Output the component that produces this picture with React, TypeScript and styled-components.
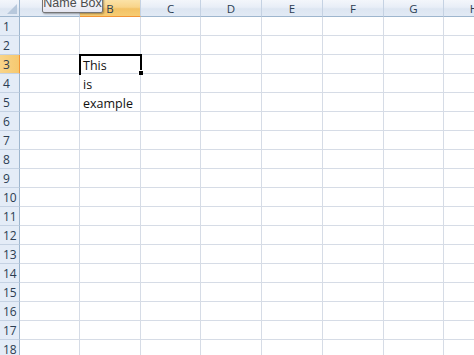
import React from "react";
import styled, { createGlobalStyle, css } from "styled-components";

const Global = createGlobalStyle`
  html, body { margin: 0; padding: 0; background: #ffffff; overflow: hidden; }
  #root { width: 474px; height: 355px; overflow: hidden; }
`;

const COLS = ["A", "B", "C", "D", "E", "F", "G", "H"];
const WIDTHS = [60, 61, 60, 61, 61, 61, 60, 61];
const ROWS = Array.from({ length: 18 }, (_, i) => i + 1);
const SEL_COL = "B";
const SEL_ROW = 3;
const CONTENT: Record<string, string> = { B3: "This", B4: "is", B5: "example" };

const Sheet = styled.div`
  width: 474px;
  height: 355px;
  overflow: hidden;
  display: grid;
  grid-template-columns: 20px ${WIDTHS.map((w) => `${w}px`).join(" ")};
  grid-auto-rows: 19px;
  grid-template-rows: 17px;
  font-family: "Open Sans", "Noto Sans", sans-serif;
`;

const headerBase = css<{ $sel?: boolean }>`
  box-sizing: border-box;
  display: flex;
  align-items: center;
  justify-content: center;
  color: #2b3d52;
  background: ${(p) =>
    p.$sel
      ? "linear-gradient(#fbe2a7 0%, #f8d48a 45%, #f3c266 55%, #f6cd73 100%)"
      : "linear-gradient(#f3f6fb 0%, #e8eef7 45%, #dde6f2 55%, #e2eaf5 100%)"};
`;

const Corner = styled.div`
  ${headerBase};
  border-right: 1px solid #9eb6ce;
  border-bottom: 1px solid #9eb6ce;
  justify-content: flex-end;
  align-items: flex-end;
  padding: 0 2px 2px 0;
`;

const ColHead = styled.div<{ $sel?: boolean }>`
  ${headerBase};
  position: relative;
  font-size: 11.5px;
  padding-top: 1px;
  border-right: 1px solid #c5d2e3;
  border-bottom: 1px solid ${(p) => (p.$sel ? "#f29436" : "#9eb6ce")};
`;

const RowHead = styled.div<{ $sel?: boolean }>`
  ${headerBase};
  background: ${(p) =>
    p.$sel ? "linear-gradient(90deg, #f8d48a, #f6c96f)" : "#e4ecf7"};
  justify-content: flex-start;
  padding-left: 3px;
  font-size: 12px;
  border-right: 1px solid ${(p) => (p.$sel ? "#f29436" : "#9eb6ce")};
  border-bottom: 1px solid #c5d2e3;
`;

const Cell = styled.div`
  position: relative;
  box-sizing: border-box;
  border-right: 1px solid #d6dce6;
  border-bottom: 1px solid #d6dce6;
  font-size: 12.5px;
  color: #111111;
  padding-left: 3px;
  display: flex;
  align-items: flex-end;
  line-height: 15px;
  white-space: nowrap;
`;

const Selection = styled.div`
  position: absolute;
  left: -1px;
  top: -1px;
  width: 63px;
  height: 21px;
  box-sizing: border-box;
  border: 2px solid #000000;
  border-bottom: none;
  pointer-events: none;
  z-index: 2;
`;

const FillHandle = styled.div`
  position: absolute;
  right: -3px;
  bottom: 0px;
  width: 4px;
  height: 4px;
  background: #000000;
  border-left: 1px solid #ffffff;
  border-top: 1px solid #ffffff;
`;

const Tooltip = styled.div`
  position: absolute;
  left: 22px;
  top: -4px;
  width: 61px;
  height: 17px;
  box-sizing: border-box;
  border: 1px solid #767676;
  border-radius: 2px;
  background: linear-gradient(#ffffff, #e4e5f0);
  box-shadow: 1px 1px 2px rgba(0, 0, 0, 0.35);
  font-family: "Liberation Sans", Arial, sans-serif;
  font-size: 12.5px;
  color: #4c4c4c;
  display: flex;
  align-items: flex-end;
  justify-content: center;
  padding-bottom: 2px;
  line-height: 13px;
  white-space: nowrap;
  z-index: 5;
`;

export default function App() {
  return (
    <>
      <Global />
      <Sheet>
        <Corner>
          <svg width="10" height="10" viewBox="0 0 10 10">
            <polygon points="10,0 10,10 0,10" fill="#b7c8dc" />
          </svg>
        </Corner>
        {COLS.map((c) => (
          <ColHead key={c} $sel={c === SEL_COL}>
            {c}
            {c === "A" && <Tooltip>Name Box</Tooltip>}
          </ColHead>
        ))}
        {ROWS.map((r) => (
          <React.Fragment key={r}>
            <RowHead $sel={r === SEL_ROW}>{r}</RowHead>
            {COLS.map((c) => (
              <Cell key={c + r}>
                {CONTENT[c + r] ?? ""}
                {c === SEL_COL && r === SEL_ROW && (
                  <Selection>
                    <FillHandle />
                  </Selection>
                )}
              </Cell>
            ))}
          </React.Fragment>
        ))}
      </Sheet>
    </>
  );
}
